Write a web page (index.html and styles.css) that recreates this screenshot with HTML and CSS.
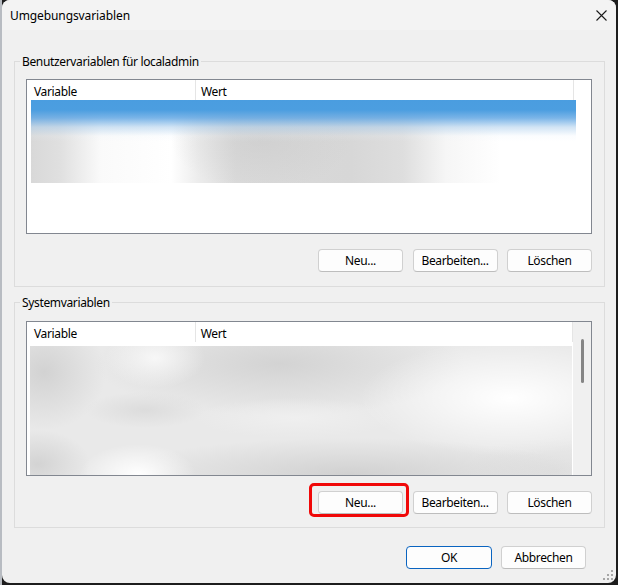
FILE: index.html
```html
<!DOCTYPE html>
<html lang="de">
<head>
<meta charset="utf-8">
<title>Umgebungsvariablen</title>
<link rel="stylesheet" href="styles.css">
</head>
<body>
<div class="window">
  <div class="titlebar">
    <span class="title">Umgebungsvariablen</span>
    <button class="close" aria-label="Schließen">
      <svg width="11" height="11" viewBox="0 0 11 11"><path d="M0.5 0.5L10.5 10.5M10.5 0.5L0.5 10.5" stroke="#1b1b1b" stroke-width="1.1" fill="none"/></svg>
    </button>
  </div>
  <div class="content">
    <fieldset class="group group-user">
      <legend>Benutzervariablen für localadmin</legend>
      <div class="list">
        <div class="list-main">
          <div class="list-head">
            <div class="col col-var">Variable</div>
            <div class="col col-val">Wert</div>
            <div class="col col-fill"></div>
          </div>
          <div class="list-body">
            <div class="blur blur-user"></div>
          </div>
        </div>
      </div>
      <div class="btn-row">
        <button class="btn">Neu...</button>
        <button class="btn">Bearbeiten...</button>
        <button class="btn">Löschen</button>
      </div>
    </fieldset>

    <fieldset class="group group-system">
      <legend>Systemvariablen</legend>
      <div class="list list-scroll">
        <div class="list-main">
          <div class="list-head">
            <div class="col col-var">Variable</div>
            <div class="col col-val">Wert</div>
          </div>
          <div class="list-body body-system">
            <div class="blur blur-system"></div>
          </div>
        </div>
        <div class="scrollbar"><div class="thumb"></div></div>
      </div>
      <div class="btn-row">
        <button class="btn">Neu...</button>
        <button class="btn">Bearbeiten...</button>
        <button class="btn">Löschen</button>
      </div>
    </fieldset>

    <div class="dialog-row">
      <button class="btn btn-default">OK</button>
      <button class="btn">Abbrechen</button>
    </div>
  </div>

  <div class="highlight"></div>
  <svg class="grip" width="12" height="12" viewBox="0 0 12 12">
    <rect x="9" y="1" width="2" height="2" fill="#a6a6a6"/>
    <rect x="9" y="5" width="2" height="2" fill="#a6a6a6"/>
    <rect x="5" y="5" width="2" height="2" fill="#a6a6a6"/>
    <rect x="9" y="9" width="2" height="2" fill="#a6a6a6"/>
    <rect x="5" y="9" width="2" height="2" fill="#a6a6a6"/>
    <rect x="1" y="9" width="2" height="2" fill="#a6a6a6"/>
  </svg>
</div>
</body>
</html>
```

FILE: styles.css
```css
* { box-sizing: border-box; }

html, body {
  margin: 0;
  padding: 0;
}

body {
  width: 618px;
  height: 585px;
  overflow: hidden;
  background: linear-gradient(90deg, #b8bcc2 0, #b8bcc2 2px, #1d1d1d 2px);
  font-family: "Noto Sans", "Open Sans", "DejaVu Sans", sans-serif;
  font-size: 12px;
  letter-spacing: -0.35px;
  color: #000;
}

.window {
  position: relative;
  margin-left: 2px;
  width: 614px;
  height: 583px;
  background: #f0f0f0;
  border-radius: 8px;
  overflow: hidden;
}

.titlebar {
  height: 30px;
  background: #f3f3f3;
  display: flex;
  align-items: center;
  justify-content: space-between;
  padding: 1px 9px 0 8px;
}

.title {
  font-size: 12px;
  line-height: 16px;
  letter-spacing: -0.1px;
}

.close {
  border: 0;
  background: none;
  padding: 0;
  width: 11px;
  height: 11px;
  display: flex;
  margin-top: -1px;
}

.content {
  padding: 0 11px 0 12px;
}

.group {
  margin: 0;
  min-width: 0;
  border: 1px solid #dcdcdc;
  padding: 9px 12px 14px 11px;
}

.group-user {
  margin-top: 23px;
}

.group-system {
  margin-top: 7px;
  padding-top: 10px;
  padding-bottom: 13px;
}

legend {
  padding: 0 2px;
  margin-left: -6px;
  line-height: 17px;
  font-size: 12px;
}

.list {
  height: 155px;
  border: 1px solid #828790;
  background: #fff;
  display: flex;
}

.list-main {
  flex: 1;
  display: flex;
  flex-direction: column;
  min-width: 0;
}

.list-head {
  height: 20px;
  display: flex;
  background: #fff;
}

.col {
  height: 20px;
  padding-top: 3px;
  line-height: 17px;
  font-size: 12px;
  white-space: nowrap;
}

.col-var {
  width: 169px;
  padding-left: 7px;
  border-right: 1px solid #e5e5e5;
}

.col-val {
  width: 378px;
  padding-left: 5px;
  border-right: 1px solid #e5e5e5;
}

.col-fill {
  flex: 1;
}

.list-body {
  flex: 1;
  display: flex;
  flex-direction: column;
  overflow: hidden;
}

.body-system {
  padding-top: 4px;
}

.blur-user {
  margin-left: 4px;
  width: 545px;
  height: 83px;
  background:
    linear-gradient(180deg, #4a9de0 0, #4c9ee0 10px, rgba(100,168,228,0.85) 18px, rgba(170,205,236,0.55) 27px, rgba(230,240,250,0.15) 36px, rgba(255,255,255,0) 42px),
    radial-gradient(ellipse 90px 50px at 230px 40px, rgba(200,200,200,0.5), rgba(200,200,200,0)),
    linear-gradient(90deg, #d8d8d8 0, #e0e0e0 30px, #fafafa 70px, #ffffff 140px, #ececec 168px, #dadada 205px, #d7d7d7 320px, #dedede 372px, #f6f6f6 415px, #ffffff 470px, #ffffff 545px);
}

.blur-system {
  margin-left: 3px;
  width: 542px;
  flex: 1;
  background:
    radial-gradient(ellipse 58px 30px at 108px 128px, #ffffff, rgba(255,255,255,0)),
    radial-gradient(ellipse 150px 58px at 480px 52px, #ffffff, rgba(255,255,255,0)),
    radial-gradient(ellipse 50px 30px at 125px 12px, #f7f7f7, rgba(247,247,247,0)),
    radial-gradient(ellipse 60px 18px at 115px 64px, #dcdcdc, rgba(220,220,220,0)),
    radial-gradient(ellipse 100px 20px at 265px 72px, #efefef, rgba(239,239,239,0)),
    radial-gradient(ellipse 62px 58px at 14px 26px, #d2d2d2, rgba(210,210,210,0)),
    radial-gradient(ellipse 52px 34px at 8px 118px, #d3d3d3, rgba(211,211,211,0)),
    radial-gradient(ellipse 185px 52px at 250px 18px, #d3d3d3, rgba(211,211,211,0)),
    radial-gradient(ellipse 235px 36px at 320px 128px, #d1d1d1, rgba(209,209,209,0)),
    radial-gradient(ellipse 90px 32px at 525px 124px, #e0e0e0, rgba(224,224,224,0)),
    #e9e9e9;
}

.scrollbar {
  width: 18px;
  background: #f0f0f0;
  display: flex;
  justify-content: center;
  padding-top: 17px;
}

.thumb {
  width: 3px;
  height: 44px;
  border-radius: 2px;
  background: #858585;
}

.btn-row {
  margin-top: 15px;
  display: flex;
  justify-content: flex-end;
  gap: 9.5px;
}

.btn {
  width: 85px;
  height: 23px;
  padding: 0;
  border: 1px solid #d0d0d0;
  border-bottom-color: #bdbdbd;
  border-radius: 4px;
  background: #fdfdfd;
  font-family: "Noto Sans", "Open Sans", "DejaVu Sans", sans-serif;
  font-size: 12px;
  letter-spacing: -0.35px;
  color: #000;
  line-height: 20px;
}

.btn-default {
  border: 1px solid #0a64c0;
  width: 86px;
}

.dialog-row {
  margin-top: 18px;
  padding-right: 19px;
  display: flex;
  justify-content: flex-end;
  gap: 9px;
}

.highlight {
  position: absolute;
  left: 307px;
  top: 483px;
  width: 100px;
  height: 34px;
  border: 3px solid #f00808;
  border-radius: 5px;
  pointer-events: none;
}

.grip {
  position: absolute;
  right: 2px;
  bottom: 2px;
}
```
